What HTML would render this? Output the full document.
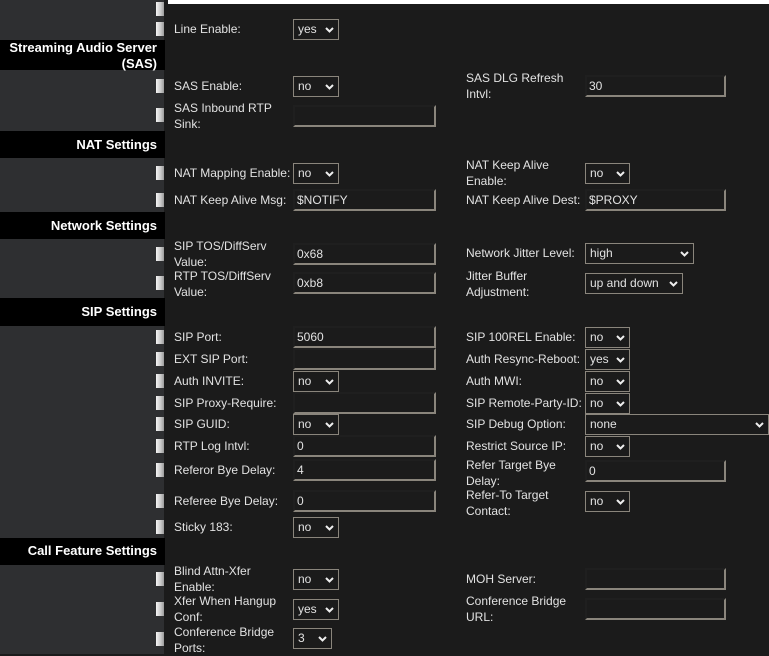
<!DOCTYPE html>
<html><head><meta charset="utf-8"><style>
*{margin:0;padding:0;box-sizing:border-box}
body{width:769px;height:654px;overflow:hidden;background:#1b1b1b;position:relative;font-family:"Liberation Sans",Arial,sans-serif;font-size:12px;color:#e2e2e2}
.left{position:absolute;left:0;top:0;width:164px;height:654px;background:#2e2f31}
.hd{position:absolute;left:0;width:165px;background:#000;color:#fff;font-weight:bold;font-size:13px;text-align:right;padding-right:8px;line-height:16px}
.sq{position:absolute;left:156px;width:8px;height:14px;background:linear-gradient(90deg,#f4f4f4,#c8c8c8 60%,#9a9a9a)}
.l,.r{position:absolute;line-height:16px;white-space:nowrap}
.l{left:174px}.r{left:466px}
.in{position:absolute;height:22px;background:#1b1b1b;border-top:2px solid #1f1f1f;border-left:2px solid #1f1f1f;border-right:2px solid #8a857c;border-bottom:2px solid #8a857c;padding-left:2px;line-height:18px;font-size:12px}
.se{position:absolute;height:21px;border:1px solid #8a857c;background:#1b1b1b;padding-left:4px;line-height:19px;font-size:12px}
.se svg{position:absolute;right:4px;top:7px}
</style></head><body>
<div class="left"></div>
<div style="position:absolute;left:168px;top:0;width:601px;height:4px;background:#fff"></div>

<div class="sq" style="top:2px"></div>
<div class="sq" style="top:22px"></div>
<div class="l" style="top:21px">Line Enable:</div>
<div class="se" style="left:293px;top:19px;width:46px">yes<svg width="9" height="6"><path d="M1 1L4.5 4.5L8 1" stroke="#eee" stroke-width="2" fill="none"/></svg></div>

<div class="hd" style="top:40px;height:30px;padding-top:0">Streaming Audio Server<br>(SAS)</div>

<div class="sq" style="top:79px"></div>
<div class="l" style="top:78px">SAS Enable:</div>
<div class="se" style="left:293px;top:76px;width:46px">no<svg width="9" height="6"><path d="M1 1L4.5 4.5L8 1" stroke="#eee" stroke-width="2" fill="none"/></svg></div>
<div class="r" style="top:70px">SAS DLG Refresh<br>Intvl:</div>
<div class="in" style="left:585px;top:75px;width:141px">30</div>
<div class="sq" style="top:108px"></div>
<div class="l" style="top:100px">SAS Inbound RTP<br>Sink:</div>
<div class="in" style="left:293px;top:105px;width:143px"></div>

<div class="hd" style="top:131px;height:27px;padding-top:6px">NAT Settings</div>
<div class="sq" style="top:166px"></div>
<div class="l" style="top:165px">NAT Mapping Enable:</div>
<div class="se" style="left:293px;top:163px;width:46px">no<svg width="9" height="6"><path d="M1 1L4.5 4.5L8 1" stroke="#eee" stroke-width="2" fill="none"/></svg></div>
<div class="r" style="top:157px">NAT Keep Alive<br>Enable:</div>
<div class="se" style="left:585px;top:163px;width:45px">no<svg width="9" height="6"><path d="M1 1L4.5 4.5L8 1" stroke="#eee" stroke-width="2" fill="none"/></svg></div>
<div class="sq" style="top:193px"></div>
<div class="l" style="top:192px">NAT Keep Alive Msg:</div>
<div class="in" style="left:293px;top:189px;width:143px">$NOTIFY</div>
<div class="r" style="top:192px">NAT Keep Alive Dest:</div>
<div class="in" style="left:585px;top:189px;width:141px">$PROXY</div>

<div class="hd" style="top:212px;height:27px;padding-top:6px">Network Settings</div>
<div class="sq" style="top:247px"></div>
<div class="l" style="top:238px">SIP TOS/DiffServ<br>Value:</div>
<div class="in" style="left:293px;top:243px;width:143px">0x68</div>
<div class="r" style="top:245px">Network Jitter Level:</div>
<div class="se" style="left:585px;top:243px;width:109px">high<svg width="9" height="6"><path d="M1 1L4.5 4.5L8 1" stroke="#eee" stroke-width="2" fill="none"/></svg></div>
<div class="sq" style="top:276px"></div>
<div class="l" style="top:268px">RTP TOS/DiffServ<br>Value:</div>
<div class="in" style="left:293px;top:272px;width:143px">0xb8</div>
<div class="r" style="top:268px">Jitter Buffer<br>Adjustment:</div>
<div class="se" style="left:585px;top:273px;width:98px">up and down<svg width="9" height="6"><path d="M1 1L4.5 4.5L8 1" stroke="#eee" stroke-width="2" fill="none"/></svg></div>

<div class="hd" style="top:298px;height:28px;padding-top:6px">SIP Settings</div>
<div class="sq" style="top:330px"></div>
<div class="l" style="top:329px">SIP Port:</div>
<div class="in" style="left:293px;top:326px;width:143px">5060</div>
<div class="r" style="top:329px">SIP 100REL Enable:</div>
<div class="se" style="left:585px;top:327px;width:45px">no<svg width="9" height="6"><path d="M1 1L4.5 4.5L8 1" stroke="#eee" stroke-width="2" fill="none"/></svg></div>
<div class="sq" style="top:352px"></div>
<div class="l" style="top:351px">EXT SIP Port:</div>
<div class="in" style="left:293px;top:348px;width:143px"></div>
<div class="r" style="top:351px">Auth Resync-Reboot:</div>
<div class="se" style="left:585px;top:349px;width:45px">yes<svg width="9" height="6"><path d="M1 1L4.5 4.5L8 1" stroke="#eee" stroke-width="2" fill="none"/></svg></div>
<div class="sq" style="top:374px"></div>
<div class="l" style="top:373px">Auth INVITE:</div>
<div class="se" style="left:293px;top:371px;width:46px">no<svg width="9" height="6"><path d="M1 1L4.5 4.5L8 1" stroke="#eee" stroke-width="2" fill="none"/></svg></div>
<div class="r" style="top:373px">Auth MWI:</div>
<div class="se" style="left:585px;top:371px;width:45px">no<svg width="9" height="6"><path d="M1 1L4.5 4.5L8 1" stroke="#eee" stroke-width="2" fill="none"/></svg></div>
<div class="sq" style="top:396px"></div>
<div class="l" style="top:395px">SIP Proxy-Require:</div>
<div class="in" style="left:293px;top:392px;width:143px"></div>
<div class="r" style="top:395px">SIP Remote-Party-ID:</div>
<div class="se" style="left:585px;top:393px;width:45px">no<svg width="9" height="6"><path d="M1 1L4.5 4.5L8 1" stroke="#eee" stroke-width="2" fill="none"/></svg></div>
<div class="sq" style="top:417px"></div>
<div class="l" style="top:416px">SIP GUID:</div>
<div class="se" style="left:293px;top:414px;width:46px">no<svg width="9" height="6"><path d="M1 1L4.5 4.5L8 1" stroke="#eee" stroke-width="2" fill="none"/></svg></div>
<div class="r" style="top:416px">SIP Debug Option:</div>
<div class="se" style="left:585px;top:414px;width:184px">none<svg width="9" height="6"><path d="M1 1L4.5 4.5L8 1" stroke="#eee" stroke-width="2" fill="none"/></svg></div>
<div class="sq" style="top:439px"></div>
<div class="l" style="top:438px">RTP Log Intvl:</div>
<div class="in" style="left:293px;top:435px;width:143px">0</div>
<div class="r" style="top:438px">Restrict Source IP:</div>
<div class="se" style="left:585px;top:436px;width:45px">no<svg width="9" height="6"><path d="M1 1L4.5 4.5L8 1" stroke="#eee" stroke-width="2" fill="none"/></svg></div>
<div class="sq" style="top:463px"></div>
<div class="l" style="top:462px">Referor Bye Delay:</div>
<div class="in" style="left:293px;top:459px;width:143px">4</div>
<div class="r" style="top:457px">Refer Target Bye<br>Delay:</div>
<div class="in" style="left:585px;top:460px;width:141px">0</div>
<div class="sq" style="top:494px"></div>
<div class="l" style="top:493px">Referee Bye Delay:</div>
<div class="in" style="left:293px;top:490px;width:143px">0</div>
<div class="r" style="top:487px">Refer-To Target<br>Contact:</div>
<div class="se" style="left:585px;top:491px;width:45px">no<svg width="9" height="6"><path d="M1 1L4.5 4.5L8 1" stroke="#eee" stroke-width="2" fill="none"/></svg></div>
<div class="sq" style="top:520px"></div>
<div class="l" style="top:519px">Sticky 183:</div>
<div class="se" style="left:293px;top:517px;width:46px">no<svg width="9" height="6"><path d="M1 1L4.5 4.5L8 1" stroke="#eee" stroke-width="2" fill="none"/></svg></div>

<div class="hd" style="top:538px;height:27px;padding-top:5px">Call Feature Settings</div>
<div class="sq" style="top:572px"></div>
<div class="l" style="top:563px">Blind Attn-Xfer<br>Enable:</div>
<div class="se" style="left:293px;top:569px;width:46px">no<svg width="9" height="6"><path d="M1 1L4.5 4.5L8 1" stroke="#eee" stroke-width="2" fill="none"/></svg></div>
<div class="r" style="top:571px">MOH Server:</div>
<div class="in" style="left:585px;top:568px;width:141px"></div>
<div class="sq" style="top:602px"></div>
<div class="l" style="top:593px">Xfer When Hangup<br>Conf:</div>
<div class="se" style="left:293px;top:599px;width:46px">yes<svg width="9" height="6"><path d="M1 1L4.5 4.5L8 1" stroke="#eee" stroke-width="2" fill="none"/></svg></div>
<div class="r" style="top:593px">Conference Bridge<br>URL:</div>
<div class="in" style="left:585px;top:598px;width:141px"></div>
<div class="sq" style="top:632px"></div>
<div class="l" style="top:624px">Conference Bridge<br>Ports:</div>
<div class="se" style="left:293px;top:628px;width:39px">3<svg width="9" height="6"><path d="M1 1L4.5 4.5L8 1" stroke="#eee" stroke-width="2" fill="none"/></svg></div>
</body></html>
